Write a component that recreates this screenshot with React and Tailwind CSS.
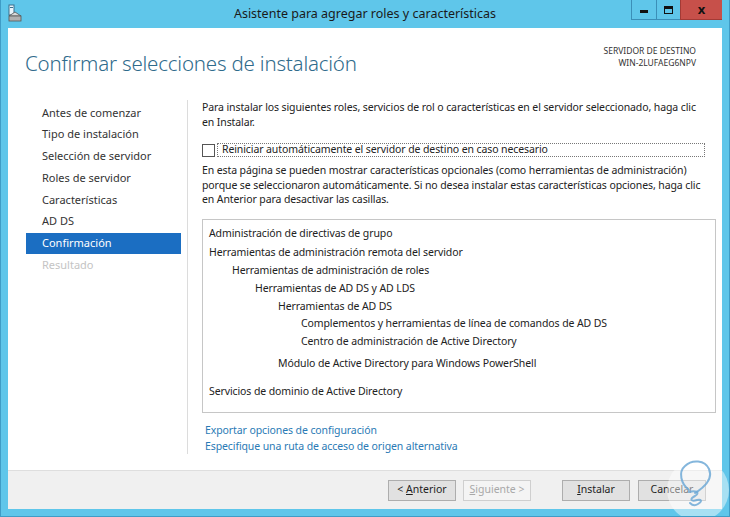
import React from 'react'

const FONT = { fontFamily: '"Noto Sans", "Open Sans", sans-serif' }

const NAV = [
  { label: 'Antes de comenzar' },
  { label: 'Tipo de instalación' },
  { label: 'Selección de servidor' },
  { label: 'Roles de servidor' },
  { label: 'Características' },
  { label: 'AD DS' },
  { label: 'Confirmación', active: true },
  { label: 'Resultado', disabled: true },
]

// indent level, margin-top before row
const ITEMS = [
  { t: 'Administración de directivas de grupo', lvl: 0, mt: 'mt-0' },
  { t: 'Herramientas de administración remota del servidor', lvl: 0, mt: 'mt-[2px]' },
  { t: 'Herramientas de administración de roles', lvl: 1, mt: 'mt-0' },
  { t: 'Herramientas de AD DS y AD LDS', lvl: 2, mt: 'mt-0' },
  { t: 'Herramientas de AD DS', lvl: 3, mt: 'mt-0' },
  { t: 'Complementos y herramientas de línea de comandos de AD DS', lvl: 4, mt: 'mt-0' },
  { t: 'Centro de administración de Active Directory', lvl: 4, mt: 'mt-0' },
  { t: 'Módulo de Active Directory para Windows PowerShell', lvl: 3, mt: 'mt-[4px]' },
  { t: 'Servicios de dominio de Active Directory', lvl: 0, mt: 'mt-[10px]' },
]

const INDENT = ['pl-0', 'pl-[23px]', 'pl-[46px]', 'pl-[69px]', 'pl-[92px]']

function TitleBar() {
  return (
    <div className="h-[28px] flex items-start relative shrink-0">
      <svg className="ml-[6px] mt-[4px]" width="16" height="18" viewBox="0 0 16 18">
        <rect x="2" y="1" width="5" height="10" fill="#e8f4fb" stroke="#3a6f8c" strokeWidth="1" />
        <rect x="3" y="3" width="3" height="1" fill="#3a6f8c" />
        <path d="M2 12 L8 8 L14 12 Z" fill="#d9d9d9" stroke="#555" strokeWidth="0.8" />
        <rect x="2" y="12" width="12" height="5" fill="#b0b0b0" stroke="#555" strokeWidth="0.8" />
      </svg>
      <div className="absolute left-0 right-0 top-[5px] text-center text-[12.5px] leading-[18px] text-[#1a1a1a]">
        Asistente para agregar roles y características
      </div>
      <div className="ml-auto mr-[7px] flex h-[20px] relative">
        <div className="w-[25px] h-[20px] border-l border-b border-[#3b8fb8] flex items-end justify-center pb-[6px]">
          <div className="w-[8px] h-[3px] bg-[#111]" />
        </div>
        <div className="w-[24px] h-[20px] border-l border-b border-[#3b8fb8] flex items-center justify-center">
          <div className="w-[9px] h-[8px] border-[1.5px] border-t-[3px] border-[#111]" />
        </div>
        <div className="w-[42px] h-[20px] bg-[#c7504a] border-l border-b border-[#a33a35] flex items-center justify-center text-[13px] font-bold text-[#111] leading-none">
          x
        </div>
      </div>
    </div>
  )
}

function Btn({ children, disabled }) {
  return (
    <div
      className={
        'w-[68px] h-[21px] flex items-center justify-center text-[10.5px] border ' +
        (disabled
          ? 'border-[#cfcfcf] bg-[#f4f4f4] text-[#a8a8a8]'
          : 'border-[#adadad] bg-[#e1e1e1] text-[#1e1e1e]')
      }
    >
      {children}
    </div>
  )
}

export default function App() {
  return (
    <div className="w-[730px] h-[517px] bg-[#5fc6ea] flex flex-col border-l border-r border-b border-[#3f9cc6] overflow-hidden relative" style={FONT}>
      <TitleBar />

      <div className="h-[481px] mx-[7px] bg-white flex flex-col overflow-hidden">
        {/* Header */}
        <div className="h-[70px] flex shrink-0">
          <div className="pl-[17px] pt-[20px] text-[20.5px] font-light text-[#2f6b8c] tracking-[-0.2px] whitespace-nowrap">
            Confirmar selecciones de instalación
          </div>
          <div className="ml-auto pr-[26px] pt-[17px] text-right text-[8.5px] leading-[12px] text-[#333]">
            <div>SERVIDOR DE DESTINO</div>
            <div>WIN-2LUFAEG6NPV</div>
          </div>
        </div>

        {/* Body */}
        <div className="flex-1 min-h-0 flex">
          <div className="w-[155px] ml-[18px] pt-[4px] shrink-0">
            {NAV.map(n => (
              <div
                key={n.label}
                className={
                  'h-[21.75px] flex items-center pl-[16px] text-[11px] ' +
                  (n.active ? 'bg-[#1b6ec2] text-white' : n.disabled ? 'text-[#c4c4c4]' : 'text-[#333]')
                }
              >
                {n.label}
              </div>
            ))}
          </div>

          <div className="w-px bg-[#dcdcdc] ml-[6px] mt-[2px] mb-[16px]" />

          <div className="flex-1 pl-[14px] pr-[6px] pt-[2px] text-[10.5px] tracking-[-0.1px] text-[#222] whitespace-nowrap">
            <p className="leading-[15px]">
              Para instalar los siguientes roles, servicios de rol o características en el servidor seleccionado, haga clic
              <br />
              en Instalar.
            </p>

            <div className="flex items-center mt-[13px] h-[14px]">
              <div className="w-[13px] h-[13px] border border-[#555] bg-white shrink-0" />
              <div className="flex-1 ml-[2px] mr-[11px] h-[14px] border border-dotted border-[#777] flex items-center pl-[4px]">
                Reiniciar automáticamente el servidor de destino en caso necesario
              </div>
            </div>

            <p className="leading-[14.5px] mt-[6px]">
              En esta página se pueden mostrar características opcionales (como herramientas de administración)
              <br />
              porque se seleccionaron automáticamente. Si no desea instalar estas características opciones, haga clic
              <br />
              en Anterior para desactivar las casillas.
            </p>

            <div className="mt-[12px] h-[194px] border border-[#c6c6c6] pl-[6px] pt-[5px]">
              {ITEMS.map(it => (
                <div key={it.t} className={'leading-[17.8px] ' + INDENT[it.lvl] + ' ' + it.mt}>
                  {it.t}
                </div>
              ))}
            </div>

            <div className="mt-[9px] pl-[3px] leading-[16px] text-[#2a7ab5]">
              <div>Exportar opciones de configuración</div>
              <div>Especifique una ruta de acceso de origen alternativa</div>
            </div>
          </div>
        </div>

        {/* Footer */}
        <div className="h-[39px] bg-[#f0f0f0] border-t border-[#dedede] flex items-center pr-[16px] shrink-0">
          <div className="ml-auto flex items-center gap-[7px]">
            <Btn>
              &lt;&nbsp;<span className="underline">A</span>nterior
            </Btn>
            <Btn disabled>
              <span className="underline">S</span>iguiente &gt;
            </Btn>
          </div>
          <div className="ml-[31px] flex items-center gap-[8px]">
            <Btn>
              <span className="underline">I</span>nstalar
            </Btn>
            <Btn>Cancelar</Btn>
          </div>
        </div>
      </div>

      {/* watermark */}
      <svg className="absolute left-[664px] top-[452px] pointer-events-none" width="66" height="66" viewBox="0 0 66 66">
        <circle cx="33" cy="38" r="31" fill="rgba(255,255,255,0.45)" />
        <path
          d="M24 38 C16 32 13 20 20 14 C27 7 40 8 44 17 C47 24 43 31 37 36 C34 38 33 40 30 41"
          fill="none"
          stroke="#6ea9d6"
          strokeWidth="2"
          strokeLinecap="round"
          opacity="0.85"
        />
        <path
          d="M24 40 C30 38 36 40 30 44 C24 47 26 50 32 48 C36 47 38 49 33 52 C30 54 27 53 25 51"
          fill="none"
          stroke="#6ea9d6"
          strokeWidth="2"
          strokeLinecap="round"
          opacity="0.85"
        />
      </svg>
    </div>
  )
}
